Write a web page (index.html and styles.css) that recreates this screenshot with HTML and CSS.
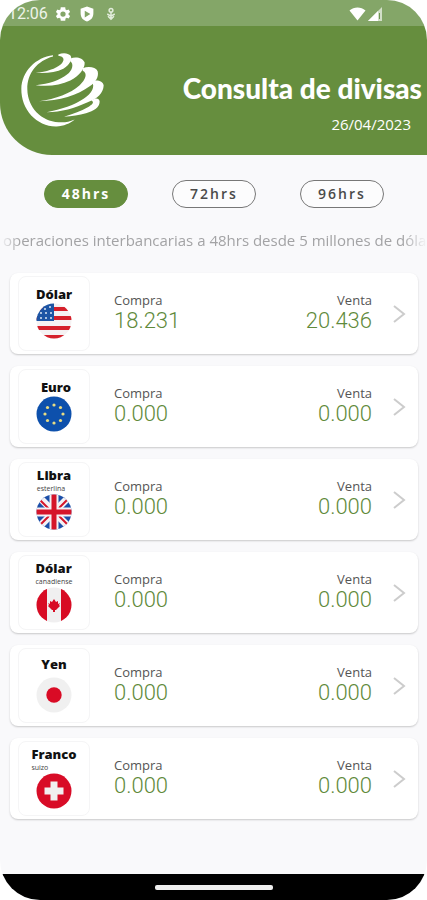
FILE: index.html
```html
<!DOCTYPE html>
<html lang="es">
<head>
<meta charset="utf-8">
<meta name="viewport" content="width=device-width, initial-scale=1">
<title>Consulta de divisas</title>
<link rel="stylesheet" href="styles.css">
</head>
<body>
<div class="screen">
  <div class="status">
    <span class="clock">12:06</span>
    <svg class="status-icon" viewBox="0 0 24 24" width="18" height="18"><path fill="#fff" fill-rule="evenodd" d="M19.4 13a7.500 7.500 0 0 0 0-2l2.100-1.600-2-3.500-2.500 1a7 7 0 0 0-1.700-1L15 3H9l-.4 2.900a7 7 0 0 0-1.700 1l-2.400-1-2 3.500L4.600 11a7.500 7.500 0 0 0 0 2l-2.100 1.600 2 3.500 2.400-1a7 7 0 0 0 1.700 1L9 21h6l.3-2.900a7 7 0 0 0 1.700-1l2.500 1 2-3.500zM12 8.500a3.500 3.500 0 1 1 0 7 3.500 3.500 0 0 1 0-7z"/></svg>
    <svg class="status-icon" viewBox="0 0 24 24" width="18" height="18"><path fill="#fff" fill-rule="evenodd" d="M12 2 3.500 5v6c0 6 3.500 9.500 8.500 11 5-1.500 8.500-5 8.500-11V5zM9 7.500l7.500 4.500-7.500 4.500z"/></svg>
    <svg class="status-icon" viewBox="0 0 24 24" width="18" height="18"><g fill="none" stroke="#e2ecdb" stroke-width="2"><path d="M12 9v9M7 12l5 3 5-3M8 15l4 4 4-4"/><circle cx="12" cy="7" r="2.500"/></g></svg>
    <span class="spacer"></span>
    <svg viewBox="0 0 17 14" width="17" height="14"><path fill="#fff" d="M.5 3.500C5-.5 12-.5 16.500 3.500L8.500 13.500z"/></svg>
    <svg viewBox="0 0 15 14" width="15" height="14"><path fill="#d2dfc8" d="M14 0v14H0z"/><path fill="#fff" d="M10 4v10H0z"/><path fill="#6f9654" d="M11 6h1v6h-1z"/></svg>
  </div>

  <header class="header">
    <svg class="logo" viewBox="60 150 255 230" width="85" height="77" role="img" aria-label="Logotipo">
      <g fill="#fff">
        <path d="M159 162C108 168 65 210 64 263C63 326 111 377 169 376C191 375 210 367 224 355C207 362 192 365 176 363C123 360 83 319 82 264C81 216 113 178 159 166z"/>
        <path d="M175 160C188 154 205 155 212 164C218 176 208 192 190 203C168 214 139 217 107 215C139 212 168 202 183 189C195 178 193 166 175 164z"/>
        <path d="M211 172C229 165 249 171 254 184C255 203 237 225 211 238C181 253 144 256 107 252C148 248 180 237 201 220C218 207 222 188 211 180z"/>
        <path d="M248 201C265 194 287 197 293 210C297 225 288 243 269 255C235 281 177 299 117 300C168 293 211 277 239 252C257 236 264 216 248 209z"/>
        <path d="M275 240C292 235 309 239 311 253C310 276 292 293 263 303C225 320 184 333 140 333C184 325 224 311 252 292C275 276 287 257 275 240z"/>
        <path d="M274 298C286 289 298 291 299 301C299 318 282 330 258 336C238 342 216 344 192 347C221 338 244 329 262 319C278 310 284 303 274 298z"/>
      </g>
    </svg>
    <div class="heading">
      <h1 class="title">Consulta de divisas</h1>
      <time class="date" datetime="2023-04-26">26/04/2023</time>
    </div>
  </header>

  <main class="main">
    <nav class="terms" aria-label="Plazo">
      <button type="button" class="term term-active">48hrs</button>
      <button type="button" class="term">72hrs</button>
      <button type="button" class="term">96hrs</button>
    </nav>
    <p class="note">operaciones interbancarias a 48hrs desde 5 millones de dóla</p>

    <ul class="rates">
      <li class="rate">
        <div class="tile"><span class="name">Dólar</span>
          <svg class="flag" viewBox="0 0 36 36" width="36" height="36"><clipPath id="c"><circle cx="18" cy="18" r="17.500"/></clipPath><g clip-path="url(#c)"><path fill="#f5f2f3" d="M0 0h36v36H0z"/><path fill="#d5202b" d="M0 4h36v4H0zM0 13h36v4H0zM0 23h36v4H0zM0 32h36v4H0z"/><path fill="#1d55a5" d="M0 0h18v18H0z"/><g fill="#dce7f5"><circle cx="9" cy="6" r="1"/><circle cx="14" cy="4" r="1"/><circle cx="5" cy="10" r="1"/><circle cx="10" cy="10" r="1"/><circle cx="15" cy="10" r="1"/><circle cx="5" cy="15" r="1"/><circle cx="10" cy="15" r="1"/><circle cx="15" cy="15" r="1"/></g></g></svg>
        </div>
        <div class="price"><span class="label">Compra</span><span class="value">18.231</span></div>
        <div class="price price-sell"><span class="label">Venta</span><span class="value">20.436</span></div>
        <svg class="chevron" viewBox="0 0 14 20" width="14" height="20"><path d="M2 2l10 8-10 8"/></svg>
      </li>
      <li class="rate">
        <div class="tile"><span class="name name-inset">Euro</span>
          <svg class="flag" viewBox="0 0 36 36" width="36" height="36"><circle cx="18" cy="18" r="17.500" fill="#0d50ac"/><g fill="#e9dc83"><circle cx="18" cy="9" r="1.600"/><circle cx="24.500" cy="11.500" r="1.600"/><circle cx="27" cy="18" r="1.600"/><circle cx="24.500" cy="24.500" r="1.600"/><circle cx="18" cy="27" r="1.600"/><circle cx="11.500" cy="24.500" r="1.600"/><circle cx="9" cy="18" r="1.600"/><circle cx="11.500" cy="11.500" r="1.600"/></g></svg>
        </div>
        <div class="price"><span class="label">Compra</span><span class="value">0.000</span></div>
        <div class="price price-sell"><span class="label">Venta</span><span class="value">0.000</span></div>
        <svg class="chevron" viewBox="0 0 14 20" width="14" height="20"><path d="M2 2l10 8-10 8"/></svg>
      </li>
      <li class="rate">
        <div class="tile tile-kind"><div class="names"><span class="name">Libra</span><span class="kind">esterlina</span></div>
          <svg class="flag" viewBox="0 0 36 36" width="36" height="36"><g clip-path="url(#c)"><path fill="#1c4fa8" d="M0 0h36v36H0z"/><path stroke="#f4f2f5" stroke-width="7" d="M3 3l30 30M33 3L3 33"/><path stroke="#d5152a" stroke-width="2" d="M4 6l11 11M32 5L21 16M4 31l11-11M32 31L21 20"/><path stroke="#f4f2f5" stroke-width="9" d="M18 0v36M0 18h36"/><path stroke="#d5152a" stroke-width="5" d="M18 0v36M0 18h36"/></g></svg>
        </div>
        <div class="price"><span class="label">Compra</span><span class="value">0.000</span></div>
        <div class="price price-sell"><span class="label">Venta</span><span class="value">0.000</span></div>
        <svg class="chevron" viewBox="0 0 14 20" width="14" height="20"><path d="M2 2l10 8-10 8"/></svg>
      </li>
      <li class="rate">
        <div class="tile tile-kind"><div class="names"><span class="name">Dólar</span><span class="kind">canadiense</span></div>
          <svg class="flag" viewBox="0 0 36 36" width="36" height="36"><g clip-path="url(#c)"><path fill="#f0eff0" d="M0 0h36v36H0z"/><path fill="#d80c24" d="M0 0h11v36H0zM25 0h11v36H25zM18 12l2 3 2-1v3l2-1-1 2 1 1-4 4h-1v2h-2v-2h-1l-4-4 1-1-1-2 2 1v-3l2 1z"/></g></svg>
        </div>
        <div class="price"><span class="label">Compra</span><span class="value">0.000</span></div>
        <div class="price price-sell"><span class="label">Venta</span><span class="value">0.000</span></div>
        <svg class="chevron" viewBox="0 0 14 20" width="14" height="20"><path d="M2 2l10 8-10 8"/></svg>
      </li>
      <li class="rate">
        <div class="tile tile-loose"><span class="name">Yen</span>
          <svg class="flag" viewBox="0 0 36 36" width="36" height="36"><circle cx="18" cy="18" r="17.500" fill="#f0f0f0"/><circle cx="18" cy="18" r="7.700" fill="#d90b25"/></svg>
        </div>
        <div class="price"><span class="label">Compra</span><span class="value">0.000</span></div>
        <div class="price price-sell"><span class="label">Venta</span><span class="value">0.000</span></div>
        <svg class="chevron" viewBox="0 0 14 20" width="14" height="20"><path d="M2 2l10 8-10 8"/></svg>
      </li>
      <li class="rate">
        <div class="tile tile-kind"><div class="names"><span class="name">Franco</span><span class="kind">suizo</span></div>
          <svg class="flag" viewBox="0 0 36 36" width="36" height="36"><circle cx="18" cy="18" r="17.500" fill="#d80c27"/><path fill="#f1eff0" d="M14.500 8.500h7v6h6v7h-6v6h-7v-6h-6v-7h6z"/></svg>
        </div>
        <div class="price"><span class="label">Compra</span><span class="value">0.000</span></div>
        <div class="price price-sell"><span class="label">Venta</span><span class="value">0.000</span></div>
        <svg class="chevron" viewBox="0 0 14 20" width="14" height="20"><path d="M2 2l10 8-10 8"/></svg>
      </li>
    </ul>
  </main>

  <footer class="navbar"><span class="handle"></span></footer>
</div>
</body>
</html>
```
FILE: styles.css
```css
* { box-sizing: border-box; }

body {
  margin: 0;
  background: #fff;
  font-family: "Open Sans", "Noto Sans", sans-serif;
  color: #555;
}

.screen {
  display: flex;
  flex-direction: column;
  min-height: 100vh;
  border-radius: 40px;
  overflow: hidden;
  background: #f9f9fb;
}

.status {
  display: flex;
  align-items: center;
  gap: 6px;
  height: 26px;
  padding: 2px 44px 0 8px;
  background: #84a668;
}
.status > svg:last-child { margin-left: -4px; }
.clock {
  font-family: Roboto, sans-serif;
  font-size: 16px;
  line-height: 20px;
  color: #eef4ea;
}
.status-icon { margin-right: -1px; }
.status-icon + .status-icon { margin-left: 1px; }
.spacer { flex: 1; }

.header {
  display: flex;
  justify-content: space-between;
  padding: 25px 5px 21px 20px;
  border-bottom-left-radius: 52px;
  background: #668e3e;
  color: #fff;
}
.heading {
  display: flex;
  flex-direction: column;
  align-items: flex-end;
  gap: 10px;
  padding-top: 21px;
}
.title {
  margin: 0;
  font-family: Lato, sans-serif;
  font-size: 28px;
  line-height: 32px;
  font-weight: 900;
}
.date {
  padding-right: 11px;
  font-size: 15px;
  line-height: 20px;
}

.main { flex: 1; }

.terms {
  display: grid;
  grid-template-columns: repeat(3, 1fr);
  justify-items: center;
  padding: 25px 21px 0 22px;
}
.term {
  width: 84px;
  height: 28px;
  padding: 0;
  border: 1px solid #777;
  border-radius: 14px;
  background: #fcfcfd;
  font-family: inherit;
  font-size: 14px;
  font-weight: 600;
  line-height: 20px;
  letter-spacing: 2px;
  color: #4a4a4a;
}
.term-active {
  border-color: #668e3e;
  background: #668e3e;
  font-weight: 700;
  color: #fff;
}

.note {
  margin: 22px 0 23px;
  padding: 0 3px;
  overflow: hidden;
  font-size: 15px;
  line-height: 20px;
  white-space: nowrap;
  color: #a3a3a5;
  -webkit-mask-image: linear-gradient(90deg, transparent, #000 20px, #000 calc(100% - 24px), transparent);
  mask-image: linear-gradient(90deg, transparent, #000 20px, #000 calc(100% - 24px), transparent);
}

.rates {
  display: flex;
  flex-direction: column;
  gap: 12px;
  margin: 0;
  padding: 0 9px 0 10px;
  list-style: none;
}
.rate {
  display: flex;
  align-items: center;
  height: 81px;
  padding: 0 12px 0 8px;
  border-radius: 8px;
  background: #fff;
  box-shadow: 0 1px 2px rgba(0, 0, 0, 0.2);
}
.tile {
  display: flex;
  flex-direction: column;
  align-items: center;
  justify-content: center;
  width: 72px;
  height: 75px;
  margin-right: 24px;
  padding-bottom: 4px;
  border: 1px solid #f5f5f6;
  border-radius: 8px;
}
.tile-loose { gap: 4px; }
.names {
  display: flex;
  flex-direction: column;
}
.name {
  font-size: 13px;
  line-height: 18px;
  font-weight: 800;
  color: #111;
}
.name-inset { padding-left: 4px; }
.kind {
  font-size: 7px;
  line-height: 10px;
  color: #444;
}
.flag { display: block; }

.price {
  display: flex;
  flex: 1;
  flex-direction: column;
  padding-bottom: 4px;
}
.price-sell {
  align-items: flex-end;
  margin-right: 20px;
}
.label {
  font-size: 13px;
  line-height: 18px;
}
.value {
  font-family: Roboto, sans-serif;
  font-size: 22px;
  font-weight: 300;
  line-height: 24px;
  color: #5f8a3b;
}
.chevron {
  fill: none;
  stroke: #ccc;
  stroke-width: 2;
}

.navbar {
  display: flex;
  justify-content: center;
  height: 26px;
  padding-top: 11px;
  background: #000;
}
.handle {
  width: 118px;
  height: 5px;
  border-radius: 2px;
  background: #eee;
}
```
